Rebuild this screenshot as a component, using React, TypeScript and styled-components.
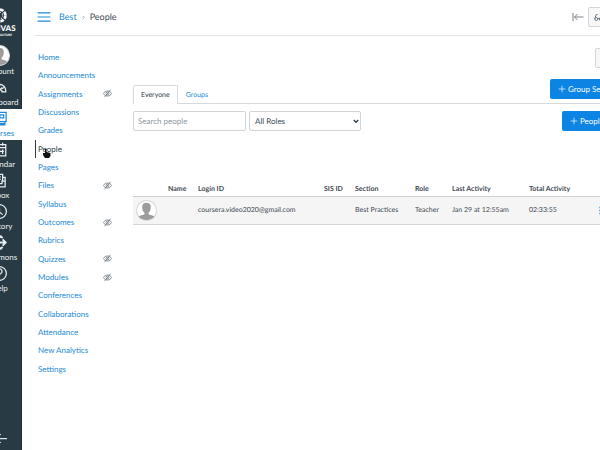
import React from "react";
import styled, { createGlobalStyle, css } from "styled-components";

const GlobalStyle = createGlobalStyle`
  * { box-sizing: border-box; }
  body {
    margin: 0;
    overflow: hidden;
    background: #fff;
    color: #3f4a54;
    font: 8px/12px Lato, "Liberation Sans", sans-serif;
    text-rendering: geometricPrecision;
  }
  a { color: #1c8ad6; text-decoration: none; }
  button, input, select { font: inherit; text-rendering: inherit; }
  svg { flex: none; }
`;

const Page = styled.div`
  display: grid;
  grid-template-columns: 22px minmax(0, 1fr);
  min-height: 100vh;
  overflow: hidden;
`;

const GlobalNav = styled.nav`
  display: flex;
  flex-direction: column;
  width: 44px;
  margin-left: -22px;
  background: #283a43;
  border-right: 1px solid #1d2f38;
`;

const Logo = styled.a`
  display: flex;
  flex-direction: column;
  align-items: center;
  height: 42px;
  padding-top: 8px;
  color: #fff;
  font: 900 8px/10px Lato, sans-serif;

  small { font-size: 3px; line-height: 4px; }
`;

const GlobalLink = styled.a<{ $active?: boolean }>`
  display: flex;
  flex-direction: column;
  align-items: center;
  justify-content: center;
  gap: 2px;
  height: 31px;
  color: #e9eef0;
  line-height: 10px;
  white-space: nowrap;
  ${(p) => p.$active && css`background: #fff; color: #1c8ad6; margin-right: -1px;`}
`;

const AccountLink = styled(GlobalLink)`
  justify-content: flex-start;
  gap: 0;
  height: 36px;
  padding-top: 3px;
`;

const Collapse = styled.button`
  display: flex;
  justify-content: center;
  margin-top: auto;
  padding: 0 0 4px;
  border: 0;
  background: none;
  color: #dce4e8;
`;

const Workspace = styled.div`
  min-width: 0;
  padding-left: 13px;
`;

const Header = styled.header`
  display: flex;
  align-items: center;
  height: 36px;
  margin-right: -60px;
  padding: 0 0 1px 2px;
  border-bottom: 1px solid #e4e6e8;
`;

const IconButton = styled.button`
  display: flex;
  padding: 0;
  border: 0;
  background: none;
  color: #1c8ad6;
`;

const Crumbs = styled.nav`
  display: flex;
  align-items: center;
  gap: 4px;
  flex: 1;
  margin-left: 8px;
  font-size: 9px;
  line-height: 14px;
  svg { color: #9aa3aa; }
`;

const ImmersiveButton = styled(IconButton)`
  margin-right: 4px;
  color: #77818a;
`;

const GreyButton = styled.button`
  display: flex;
  align-items: center;
  gap: 4px;
  height: 20px;
  padding: 0 5px;
  border: 1px solid #d3d7da;
  border-radius: 2px;
  background: #f7f7f7;
  color: #4a555f;
  white-space: nowrap;
`;

const StudentView = styled(GreyButton)`
  width: 72px;
`;

const Columns = styled.div`
  display: grid;
  grid-template-columns: 98px minmax(0, 1fr);
`;

const CourseNav = styled.ul`
  display: grid;
  grid-auto-rows: 1fr;
  height: 330px;
  margin: 12px 0 0;
  padding: 0 20px 0 0;
  list-style: none;
`;

const CourseItem = styled.li`
  display: flex;
`;

const CourseLink = styled.a<{ $active?: boolean }>`
  display: flex;
  flex: 1;
  align-items: center;
  justify-content: space-between;
  padding: 0 1px 0 2px;
  border-left: 1px solid transparent;
  white-space: nowrap;
  ${(p) => p.$active && css`color: #2d3b45; border-color: #2d3b45;`}
  svg { color: #646d74; }
`;

const Main = styled.main`
  margin-right: -14px;
`;

const MenuRow = styled.div`
  display: flex;
  justify-content: flex-end;
  padding-top: 12px;
`;

const TabRow = styled.div`
  display: flex;
  align-items: flex-end;
  height: 36px;
  border-bottom: 1px solid #d6dade;
`;

const Tab = styled.button<{ $active?: boolean }>`
  height: 19px;
  margin-bottom: -1px;
  padding: 0 7px 1px;
  border: 1px solid transparent;
  border-bottom: 0;
  border-radius: 2px 2px 0 0;
  background: none;
  color: #1c8ad6;
  font-size: 7px;
  ${(p) => p.$active && css`background: #fff; border-color: #d6dade; color: #2d3b45;`}
`;

const BlueButton = styled.button`
  display: flex;
  align-items: center;
  gap: 2px;
  height: 20px;
  padding: 0 8px;
  border: 0;
  border-radius: 2px;
  background: #0b84e4;
  color: #fff;
  white-space: nowrap;
`;

const GroupSet = styled(BlueButton)`
  width: 64px;
  margin: 0 0 4px auto;
`;

const AddPeople = styled(BlueButton)`
  width: 52px;
  margin-left: auto;
`;

const Filters = styled.div`
  display: flex;
  gap: 3px;
  margin-top: 7px;
`;

const Search = styled.input`
  width: 113px;
  height: 20px;
  padding: 0 4px;
  border: 1px solid #d0d5d9;
  border-radius: 2px;
  &::placeholder { color: #8e979e; }
`;

const RolesField = styled.div`
  position: relative;
  width: 112px;
  svg {
    position: absolute;
    right: 2px;
    top: 7px;
    color: #2d3b45;
    pointer-events: none;
  }
`;

const Roles = styled.select`
  appearance: none;
  width: 100%;
  height: 20px;
  padding: 0 5px;
  border: 1px solid #d0d5d9;
  border-radius: 2px;
  background: #fff;
  color: #3d4a54;
`;

const Roster = styled.table`
  width: 100%;
  margin-top: 51px;
  border-collapse: collapse;
  table-layout: fixed;
  font-size: 7px;
  line-height: 12px;
  text-align: left;
  white-space: nowrap;
  th, td { padding: 0; }
  th { height: 14px; font-weight: 700; border-bottom: 1px solid #cdd2d6; }
  td { height: 28px; background: #f5f5f5; border-bottom: 1px solid #d3d7da; }
`;

const AvatarCell = styled.td`
  && { padding-left: 3px; }
  svg { display: block; }
`;

const Pointer = styled.svg`
  position: absolute;
  left: 42px;
  top: 149px;
  pointer-events: none;
`;

type IconProps = { name: string; size?: number };

const shapes: Record<string, React.ReactNode> = {
  gauge: <path d="M2 17a10 10 0 1 1 20 0v2h-6a4 4 0 0 0-8 0H2zM12 7v3M5 12l3 2M19 12l-3 2M12 17l4-5" />,
  book: <path d="M3 2h18v15H3zM3 17v5h16v-5M7 2v15M11 6h6v5h-6zM7 20h12" />,
  calendar: <path d="M2 4h20v18H2zM2 9h20M7 1v5M17 1v5M7 12v7M12 12v7M17 12v7M5 15h14" />,
  inbox: <path d="M4 13V2h13v11M17 7h4v15H2v-9h6v4h8v-4h5M7 6h7M7 10h7" />,
  clock: <><circle cx="12" cy="12" r="11" /><path d="M12 5v8l5 4" /></>,
  commons: <path d="M3 12h18M17 7l5 5-5 5M10 5l4-3 3 3M10 19l4 3 3-3" strokeWidth="3" />,
  help: <><circle cx="12" cy="12" r="11" /><path d="M8 9a4 4 0 1 1 6 3c-2 1-2 2-2 3M12 18v1" /></>,
  menu: <path d="M1 5h22M1 12h22M1 19h22" />,
  collapse: <path d="M1 4v16M6 12h18M14 5l-8 7 8 7" />,
  immersive: <path d="M2 4v16M5 12h18M11 6l-6 6 6 6" />,
  chevron: <path d="M8 4l8 8-8 8" strokeWidth="4" />,
  down: <path d="M3 8l9 9 9-9" strokeWidth="5" />,
  plus: <path d="M12 2v20M2 12h20" />,
  hidden: <><path d="M1 12c5-9 17-9 22 0-5 9-17 9-22 0zM4 22L20 2" /><circle cx="12" cy="12" r="4" /></>,
  glasses: <><circle cx="6" cy="16" r="4" /><circle cx="18" cy="16" r="4" /><path d="M10 15h4M2 15L6 4h3M22 15L18 4" /></>,
  dots: <path d="M12 2v4M12 10v4M12 18v4" strokeWidth="6" />,
};

const Icon = ({ name, size = 14 }: IconProps) => (
  <svg width={size} height={size} viewBox="0 0 24 24" fill="none" stroke="currentColor" strokeWidth="2" aria-hidden="true">
    {shapes[name]}
  </svg>
);

const Person = ({ size }: { size: number }) => (
  <svg width={size} height={size} viewBox="0 0 40 40" aria-hidden="true">
    <circle cx="20" cy="20" r="19" fill="#fff" stroke="#d4d6d8" strokeWidth="2" />
    <path d="M20 5c-6 0-9 4-8 10 0 5 2 7 4 9v3c-4 2-9 2-11 5 8 8 22 8 30 0-2-3-7-3-11-5v-3c2-2 4-4 4-9 1-6-2-10-8-10z" fill="#9c9c9c" />
  </svg>
);

const globalLinks = [
  ["Dashboard", "gauge"], ["Courses", "book"], ["Calendar", "calendar"], ["Inbox", "inbox"],
  ["History", "clock"], ["Commons", "commons"], ["Help", "help"],
];

const courseLinks = [
  "Home", "Announcements", "Assignments", "Discussions", "Grades", "People", "Pages", "Files", "Syllabus",
  "Outcomes", "Rubrics", "Quizzes", "Modules", "Conferences", "Collaborations", "Attendance", "New Analytics", "Settings",
];
const hiddenLinks = ["Assignments", "Files", "Outcomes", "Quizzes", "Modules"];

export default function App() {
  return (
    <>
      <GlobalStyle />
      <Page>
        <GlobalNav aria-label="Global">
          <Logo href="#">
            <svg width="15" height="15" viewBox="0 0 28 28" fill="none" stroke="currentColor" aria-hidden="true">
              <circle cx="14" cy="14" r="11" strokeWidth="5" strokeDasharray="6.6 2" />
              <circle cx="14" cy="14" r="6" strokeWidth="2" strokeDasharray="2 2.7" />
            </svg>
            CANVAS
            <small>BY INSTRUCTURE</small>
          </Logo>
          <AccountLink href="#"><Person size={21} />Account</AccountLink>
          {globalLinks.map(([label, icon]) => (
            <GlobalLink key={label} href="#" $active={label === "Courses"}><Icon name={icon} size={15} />{label}</GlobalLink>
          ))}
          <Collapse aria-label="Collapse navigation"><Icon name="collapse" size={15} /></Collapse>
        </GlobalNav>
        <Workspace>
          <Header>
            <IconButton aria-label="Course menu"><Icon name="menu" size={14} /></IconButton>
            <Crumbs aria-label="Breadcrumb"><a href="#">Best</a><Icon name="chevron" size={5} /><span>People</span></Crumbs>
            <ImmersiveButton aria-label="Immersive reader"><Icon name="immersive" size={12} /></ImmersiveButton>
            <StudentView><Icon name="glasses" size={9} />Student View</StudentView>
          </Header>
          <Columns>
            <CourseNav>
              {courseLinks.map((label) => (
                <CourseItem key={label}>
                  <CourseLink href="#" $active={label === "People"}>
                    {label}{hiddenLinks.includes(label) && <Icon name="hidden" size={9} />}
                  </CourseLink>
                </CourseItem>
              ))}
            </CourseNav>
            <Main>
              <MenuRow><GreyButton aria-label="People options"><Icon name="dots" size={7} /></GreyButton></MenuRow>
              <TabRow>
                <Tab $active>Everyone</Tab><Tab>Groups</Tab>
                <GroupSet><Icon name="plus" size={8} />Group Set</GroupSet>
              </TabRow>
              <Filters>
                <Search aria-label="Search people" placeholder="Search people" />
                <RolesField>
                  <Roles aria-label="Role"><option>All Roles</option></Roles>
                  <Icon name="down" size={6} />
                </RolesField>
                <AddPeople><Icon name="plus" size={8} />People</AddPeople>
              </Filters>
              <Roster>
                <colgroup>
                  <col width="35" /><col width="30" /><col width="126" /><col width="31" />
                  <col width="60" /><col width="37" /><col width="77" /><col width="67" /><col />
                </colgroup>
                <thead><tr>
                  <th /><th>Name</th><th>Login ID</th><th>SIS ID</th><th>Section</th><th>Role</th><th>Last Activity</th><th>Total Activity</th><th />
                </tr></thead>
                <tbody><tr>
                  <AvatarCell><Person size={21} /></AvatarCell><td /><td>coursera.video2020@gmail.com</td><td />
                  <td>Best Practices</td><td>Teacher</td><td>Jan 29 at 12:55am</td><td>02:33:55</td>
                  <td><IconButton aria-label="Manage user"><Icon name="dots" size={9} /></IconButton></td>
                </tr></tbody>
              </Roster>
            </Main>
          </Columns>
        </Workspace>
      </Page>
      <Pointer width="9" height="9" viewBox="0 0 9 9" aria-hidden="true">
        <path d="M3 0h1.500v3l4 1v3L7 9H3L1 6V4h2z" fill="#111" />
      </Pointer>
    </>
  );
}
